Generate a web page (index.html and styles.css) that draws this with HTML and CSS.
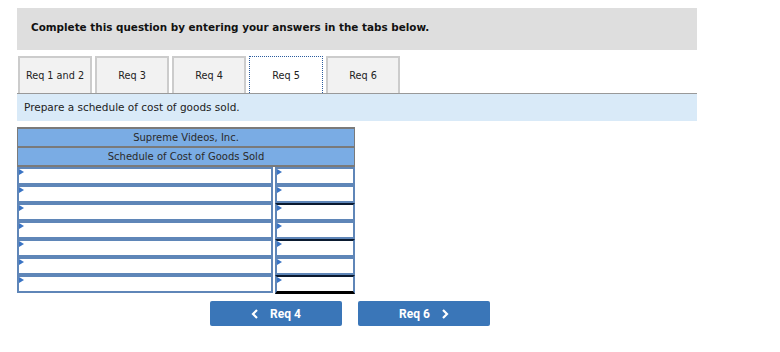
FILE: index.html
```html
<!DOCTYPE html>
<html lang="en">
<head>
    <meta charset="UTF-8">
    <meta name="viewport" content="width=device-width, initial-scale=1.0">
    <title>Req 5</title>
    <link rel="stylesheet" href="styles.css">
</head>
<body>
    <div class="wrap">
        <div class="prompt">Complete this question by entering your answers in the tabs below.</div>

        <!-- Tabs -->
        <div class="tabs">
            <div class="tab">Req 1 and 2</div>
            <div class="tab">Req 3</div>
            <div class="tab">Req 4</div>
            <div class="tab active">Req 5</div>
            <div class="tab">Req 6</div>
        </div>
        <div class="instruction">Prepare a schedule of cost of goods sold.</div>

        <!-- Schedule -->
        <div class="schedule">
            <div class="head">Supreme Videos, Inc.</div>
            <div class="head">Schedule of Cost of Goods Sold</div>
            <div class="row"><div class="cell label"></div><div class="cell amount"></div></div>
            <div class="row"><div class="cell label"></div><div class="cell amount"></div></div>
            <div class="row"><div class="cell label"></div><div class="cell amount rule"></div></div>
            <div class="row"><div class="cell label"></div><div class="cell amount"></div></div>
            <div class="row"><div class="cell label"></div><div class="cell amount rule"></div></div>
            <div class="row"><div class="cell label"></div><div class="cell amount"></div></div>
            <div class="row"><div class="cell label"></div><div class="cell amount rule total"></div></div>
        </div>

        <div class="nav">
            <button class="nav-btn">
                <svg width="8" height="10" viewBox="0 0 8 10"><path d="M6 1 L2 5 L6 9" fill="none" stroke="#fff" stroke-width="2.2"/></svg>
                <span>Req 4</span>
            </button>
            <button class="nav-btn">
                <span>Req 6</span>
                <svg width="8" height="10" viewBox="0 0 8 10"><path d="M2 1 L6 5 L2 9" fill="none" stroke="#fff" stroke-width="2.2"/></svg>
            </button>
        </div>
    </div>
</body>
</html>
```

FILE: styles.css
```css
body {
    margin: 0;
    background-color: white;
    color: #222;
    font-family: "DejaVu Sans", Verdana, sans-serif;
}
.wrap {
    width: 680px;
    margin: 8px 0 0 17px;
}
.prompt {
    height: 42px;
    line-height: 38px;
    padding-left: 14px;
    background-color: #dedede;
    font-size: 10.4px;
    font-weight: bold;
    color: #111;
}
.tabs {
    display: flex;
    gap: 3px;
    margin-top: 6px;
    padding-left: 1px;
    border-bottom: 1px solid #999;
}
.tab {
    width: 70px;
    height: 35px;
    line-height: 36px;
    text-align: center;
    font-size: 9.7px;
    color: #222;
    background-color: #f2f2f2;
    border: 2px solid #ccc;
    border-bottom: none;
}
.tab.active {
    width: 72px;
    background-color: white;
    border: 1px dotted #2b5c9e;
    border-bottom: none;
    height: 36px;
    line-height: 37px;
}
.instruction {
    height: 27px;
    line-height: 27px;
    padding-left: 7px;
    background-color: #d9eaf8;
    font-size: 10.5px;
    color: #222;
}
.schedule {
    width: 338px;
    margin-top: 6px;
}
.head {
    height: 17px;
    line-height: 18px;
    text-align: center;
    background-color: #7aace4;
    border: 1px solid #7a7a7a;
    border-top-width: 2px;
    border-bottom: none;
    font-size: 10px;
    color: #2a2a2a;
}
.head + .head {
    border-bottom: 2px solid #7a7a7a;
}
.row {
    display: flex;
}
.cell {
    position: relative;
    height: 14px;
    background-color: white;
    border: 2px solid #5f86b8;
}
.cell.label {
    width: 254px;
}
.cell.amount {
    width: 76px;
    margin-left: 2px;
}
.cell::before {
    content: "";
    position: absolute;
    top: 0;
    left: 0;
    border-top: 3px solid transparent;
    border-bottom: 3px solid transparent;
    border-left: 5px solid #3a74c4;
}
.cell.rule {
    border-top: 2px solid #0a1a30;
}
.cell.total {
    height: 14px;
    border-bottom: 3px solid black;
}
.nav {
    display: flex;
    gap: 16px;
    margin-top: 7px;
    padding-left: 193px;
}
.nav-btn {
    width: 132px;
    height: 25px;
    display: flex;
    align-items: center;
    justify-content: center;
    gap: 11px;
    background-color: #3a76b8;
    color: white;
    border: none;
    border-radius: 2px;
    font-family: Roboto, "Liberation Sans", sans-serif;
    font-size: 12px;
    font-weight: bold;
    cursor: pointer;
}
```
